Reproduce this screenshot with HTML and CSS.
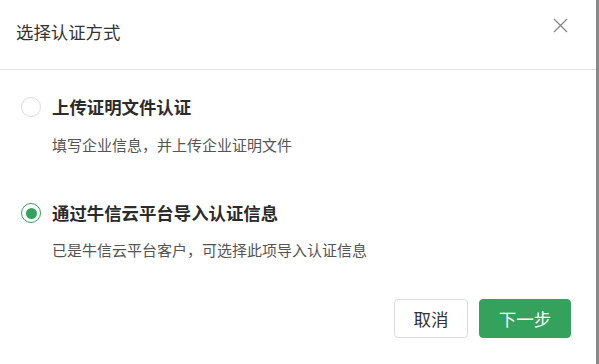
FILE: index.html
```html
<!DOCTYPE html>
<html lang="zh">
<head>
<meta charset="utf-8">
<link rel="stylesheet" href="styles.css">
</head>
<body>
<div class="screen">
  <div class="dialog">
    <div class="header">
      <div class="title">选择认证方式</div>
      <div class="close">
        <svg width="15" height="15" viewBox="0 0 15 15"><path d="M1 1L14 14M14 1L1 14" stroke="#8a8a8a" stroke-width="1.4" fill="none"/></svg>
      </div>
    </div>
    <div class="body">
      <div class="option">
        <div class="row">
          <span class="radio"></span>
          <span class="label">上传证明文件认证</span>
        </div>
        <div class="desc">填写企业信息，并上传企业证明文件</div>
      </div>
      <div class="option second">
        <div class="row">
          <span class="radio checked"><span class="dot"></span></span>
          <span class="label">通过牛信云平台导入认证信息</span>
        </div>
        <div class="desc">已是牛信云平台客户，可选择此项导入认证信息</div>
      </div>
    </div>
    <div class="footer">
      <button class="btn cancel">取消</button>
      <button class="btn primary">下一步</button>
    </div>
  </div>
  <div class="edge"></div>
</div>
</body>
</html>
```
FILE: styles.css
```css
html, body {
  margin: 0;
  padding: 0;
  background: #fff;
}
body {
  font-family: "Noto Sans CJK SC", "Noto Sans", sans-serif;
  color: #333;
}
.screen {
  display: flex;
  width: 599px;
  height: 364px;
}
.dialog {
  flex: 1;
  display: flex;
  flex-direction: column;
}
.edge {
  width: 3px;
  background: #888;
}
.header {
  display: flex;
  justify-content: space-between;
  align-items: flex-start;
  padding: 20px 28px 25px 16px;
  border-bottom: 1px solid #e3e3e3;
}
.title {
  font-size: 17.4px;
  line-height: 24px;
  color: #333;
}
.close {
  margin-top: -2px;
  width: 15px;
  height: 15px;
  display: flex;
}
.body {
  padding: 25px 0 0 21px;
}
.option.second {
  margin-top: 45px;
}
.row {
  display: flex;
  align-items: center;
  height: 24px;
}
.radio {
  box-sizing: border-box;
  width: 20px;
  height: 20px;
  border: 1px solid #dcdcdc;
  border-radius: 50%;
  display: flex;
  align-items: center;
  justify-content: center;
  margin-right: 11px;
}
.radio.checked {
  border: 1.5px solid #34a15d;
}
.dot {
  width: 11px;
  height: 11px;
  border-radius: 50%;
  background: #34a15d;
}
.label {
  font-size: 17.4px;
  font-weight: bold;
  color: #2b2b2b;
  line-height: 24px;
}
.desc {
  margin-top: 15px;
  margin-left: 31px;
  font-size: 15px;
  line-height: 22px;
  color: #555;
}
.option.second .desc {
  margin-top: 14px;
}
.footer {
  display: flex;
  justify-content: flex-end;
  gap: 11px;
  padding: 38px 25px 0 0;
}
.btn {
  box-sizing: border-box;
  height: 39px;
  border-radius: 4px;
  font-family: "Noto Sans CJK SC", "Noto Sans", sans-serif;
  font-size: 17.5px;
  padding: 0;
  cursor: pointer;
}
.cancel {
  width: 74px;
  background: #fff;
  border: 1px solid #dcdcdc;
  color: #333;
}
.primary {
  width: 92px;
  background: #34a15d;
  border: 1px solid #34a15d;
  color: #fff;
}
```
